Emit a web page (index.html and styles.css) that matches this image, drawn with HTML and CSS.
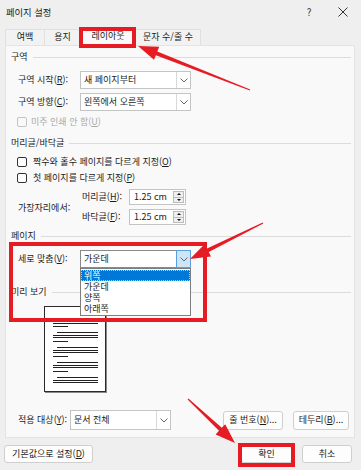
FILE: index.html
```html
<!DOCTYPE html>
<html lang="ko">
<head>
<meta charset="utf-8">
<title>페이지 설정</title>
<link rel="stylesheet" href="styles.css">
</head>
<body>
<div class="titlebar">
  <span class="title">페이지 설정</span>
  <span class="help">?</span>
  <svg class="close" width="10" height="10" viewBox="0 0 10 10"><path d="M0.5 0.5L9.5 9.5M9.5 0.5L0.5 9.5" stroke="#333" stroke-width="1" fill="none"/></svg>
</div>
<div class="tabs">
  <div class="tab t1">여백</div>
  <div class="tab t2">용지</div>
  <div class="tab t3 active">레이아웃</div>
  <div class="tab t4">문자 수/줄 수</div>
</div>
<div class="panel">
  <div class="glabel g-first"><span>구역</span><i></i></div>
  <div class="row sel-row r1">
    <span class="lbl">구역 시작(<u>R</u>):</span>
    <div class="select"><span class="val">새 페이지부터</span><span class="chev"><svg width="8" height="5" viewBox="0 0 8 5"><path d="M0.5 0.5L4 4L7.5 0.5" stroke="#666" fill="none"/></svg></span></div>
  </div>
  <div class="row sel-row r2">
    <span class="lbl">구역 방향(<u>C</u>):</span>
    <div class="select"><span class="val">왼쪽에서 오른쪽</span><span class="chev"><svg width="8" height="5" viewBox="0 0 8 5"><path d="M0.5 0.5L4 4L7.5 0.5" stroke="#666" fill="none"/></svg></span></div>
  </div>
  <div class="cb-row disabled r3"><span class="box"></span><span>미주 인쇄 안 함(<u>U</u>)</span></div>

  <div class="glabel g2"><span>머리글/바닥글</span><i></i></div>
  <div class="cb-row r4"><span class="box"></span><span>짝수와 홀수 페이지를 다르게 지정(<u>O</u>)</span></div>
  <div class="cb-row r5"><span class="box"></span><span>첫 페이지를 다르게 지정(<u>P</u>)</span></div>
  <div class="edge">
    <span class="edge-lbl">가장자리에서:</span>
    <div class="edge-col">
      <div class="spin-row"><span class="slbl">머리글(<u>H</u>):</span><div class="spin"><span class="sval">1.25 cm</span><span class="sbtns"><span class="sb up"></span><span class="sb down"></span></span></div></div>
      <div class="spin-row"><span class="slbl">바닥글(<u>F</u>):</span><div class="spin"><span class="sval">1.25 cm</span><span class="sbtns"><span class="sb up"></span><span class="sb down"></span></span></div></div>
    </div>
  </div>

  <div class="glabel g3"><span>페이지</span><i></i></div>
  <div class="row sel-row r6">
    <span class="lbl">세로 맞춤(<u>V</u>):</span>
    <div class="select open"><span class="val">가운데</span><span class="chev"><svg width="8" height="5" viewBox="0 0 8 5"><path d="M0.5 0.5L4 4L7.5 0.5" stroke="#666" fill="none"/></svg></span>
      <ul class="dropdown">
        <li class="hl">위쪽</li>
        <li>가운데</li>
        <li>양쪽</li>
        <li>아래쪽</li>
      </ul>
    </div>
  </div>

  <div class="glabel g4"><span>미리 보기</span><i></i></div>
  <div class="preview">
    <svg width="64" height="88" viewBox="0 0 64 88">
      <rect x="1" y="1" width="62" height="86" fill="#8a8a8a"/>
      <rect x="0.5" y="0.5" width="61" height="85" fill="#fff" stroke="#2a2a2a"/>
      <g fill="#222">
        <rect x="13" y="12" width="41" height="1"/>
        <rect x="9" y="17" width="45" height="1"/>
        <rect x="9" y="20" width="15" height="1"/>
        <rect x="13" y="26" width="41" height="1"/>
        <rect x="9" y="29" width="45" height="1"/>
        <rect x="9" y="31" width="45" height="1"/>
        <rect x="9" y="35" width="15" height="1"/>
        <rect x="13" y="41" width="41" height="1"/>
        <rect x="9" y="44" width="45" height="1"/>
        <rect x="9" y="46" width="45" height="1"/>
        <rect x="9" y="50" width="15" height="1"/>
        <rect x="13" y="56" width="41" height="1"/>
        <rect x="9" y="59" width="45" height="1"/>
        <rect x="9" y="61" width="45" height="1"/>
        <rect x="9" y="65" width="15" height="1"/>
        <rect x="13" y="71" width="41" height="1"/>
        <rect x="9" y="74" width="45" height="1"/>
        <rect x="9" y="76" width="45" height="1"/>
      </g>
    </svg>
  </div>

  <div class="apply">
    <span class="alb">적용 대상(<u>Y</u>):</span>
    <div class="select wide"><span class="val">문서 전체</span><span class="chev"><svg width="8" height="5" viewBox="0 0 8 5"><path d="M0.5 0.5L4 4L7.5 0.5" stroke="#666" fill="none"/></svg></span></div>
    <button class="btn b-line">줄 번호(<u>N</u>)...</button>
    <button class="btn b-border">테두리(<u>B</u>)...</button>
  </div>
</div>
<div class="footer">
  <button class="btn b-default">기본값으로 설정(<u>D</u>)</button>
  <button class="btn b-ok">확인</button>
  <button class="btn b-cancel">취소</button>
</div>

<div class="mark m-tab"></div>
<div class="mark m-page"></div>
<div class="mark m-ok"></div>
<svg class="arrows" width="361" height="470" viewBox="0 0 361 470">
  <g fill="#e51c23">
    <polygon points="138,46 159.2,46.8 157.3,51.4 250.2,89.4 249.8,90.6 155.9,55.2 154.0,59.8"/>
    <polygon points="190,259 211.0,256.5 208.8,252.0 263.3,223.5 262.7,222.5 207.0,248.4 204.8,243.9"/>
    <polygon points="235,443 225.2,424.2 221.8,427.8 188.4,398.6 187.6,399.4 219.0,430.8 215.6,434.4"/>
  </g>
</svg>
</body>
</html>
```
FILE: styles.css
```css
* { box-sizing: border-box; margin: 0; padding: 0; }
html, body { width: 361px; height: 470px; overflow: hidden; }
body {
  position: relative;
  background: #efefef;
  font-family: "Noto Sans CJK KR", "Noto Sans", sans-serif;
  font-size: 9px;
  line-height: 12px;
  color: #1b1b1b;
}
u { text-decoration: underline; text-underline-offset: 1px; }

.titlebar {
  height: 28px;
  display: flex;
  align-items: flex-start;
  padding: 6px 0 0 6px;
}
.title { font-size: 9.3px; }
.help { margin-left: auto; width: 8px; text-align: center; font-size: 10px; margin-right: 25px; color: #333; }
.close { margin-top: 1px; margin-right: 13px; }

.tabs {
  display: flex;
  align-items: flex-end;
  height: 17px;
  margin-left: 5px;
}
.tab {
  height: 16px;
  line-height: 14px;
  text-align: center;
  background: #f2f2f2;
  border: 1px solid #e0e0e0;
  border-bottom: none;
  margin-right: -1px;
}
.t1 { width: 40px; }
.t2 { width: 37px; }
.t3 { width: 56px; }
.t4 { width: 66px; }
.tab.active { height: 18px; background: #f9f9f9; line-height: 16px; position: relative; z-index: 1; }

.panel {
  margin-left: 5px;
  width: 350px;
  height: 393px;
  background: #f9f9f9;
  border: 1px solid #e3e3e3;
  display: flex;
  flex-direction: column;
}

.glabel {
  display: flex;
  align-items: center;
  height: 12px;
  padding-left: 5px;
  padding-right: 3px;
}
.glabel i { flex: 1; height: 1px; background: #dcdcdc; margin-left: 5px; }
.g-first { margin-top: 5px; }
.g2 { margin-top: 9px; }
.g3 { margin-top: 5px; }
.g4 { margin-top: 18px; }

.row { display: flex; align-items: center; padding-left: 12px; }
.sel-row { height: 18px; }
.r1 { margin-top: 8px; }
.r2 { margin-top: 4px; }
.r6 { margin-top: 8px; }
.lbl { width: 62px; }

.select {
  position: relative;
  width: 111px;
  height: 18px;
  background: #fff;
  border: 1px solid #c4c4c4;
  display: flex;
  align-items: center;
}
.select .val { flex: 1; padding-left: 3px; }
.chev {
  width: 14px;
  height: 100%;
  border-left: 1px solid #d8d8d8;
  display: flex;
  align-items: center;
  justify-content: center;
}
.select.open { border-color: #8a8a8a; }
.select.open .chev { background: #cde5f8; border: 1px solid #5b9fdc; margin: -1px -1px -1px 0; height: 18px; width: 15px; }

.dropdown {
  list-style: none;
  position: absolute;
  left: -1px;
  top: 17px;
  width: 111px;
  background: #fff;
  border: 1px solid #7e7e7e;
  padding: 1px 0 1px 0;
  z-index: 3;
}
.dropdown li { height: 11px; line-height: 11px; padding-left: 3px; }
.dropdown li.hl { background: #0078d7; color: #fff; outline: 1px dotted #9fd0ff; outline-offset: -1px; }

.cb-row { display: flex; align-items: center; height: 12px; padding-left: 11px; }
.cb-row .box {
  width: 10px; height: 10px;
  border: 1px solid #333;
  border-radius: 2px;
  background: #fff;
  margin-right: 6px;
}
.cb-row.disabled { color: #a9a9a9; }
.cb-row.disabled .box { border-color: #c4c4c4; background: #f9f9f9; margin-right: 4px; }
.r3 { margin-top: 5px; }
.r4 { margin-top: 7px; }
.r5 { margin-top: 4px; }

.edge { display: flex; align-items: center; padding-left: 12px; margin-top: 5px; height: 36px; }
.edge-lbl { width: 64px; margin-top: 2px; }
.edge-col { display: flex; flex-direction: column; gap: 4px; }
.spin-row { display: flex; align-items: center; height: 16px; }
.slbl { width: 47px; }
.spin {
  width: 57px; height: 16px;
  background: #fff;
  border: 1px solid #c4c4c4;
  display: flex;
  align-items: center;
  padding: 1px;
}
.sval { flex: 1; padding-left: 3px; font-size: 9px; }
.sbtns { width: 11px; height: 100%; display: flex; flex-direction: column; }
.sb {
  flex: 1;
  background: #efefef;
  border: 1px solid #bcbcbc;
  display: flex; align-items: center; justify-content: center;
}
.sb.down { border-top: none; }
.sb::after { content: ""; border-left: 2px solid transparent; border-right: 2px solid transparent; }
.sb.up::after { border-bottom: 2px solid #111; }
.sb.down::after { border-top: 2px solid #111; }

.preview { margin-top: 8px; padding-left: 38px; height: 86px; }
.preview svg { display: block; }

.apply { display: flex; align-items: center; height: 20px; margin-top: 18px; padding-left: 12px; padding-right: 5px; }
.alb { width: 52px; }
.select.wide { width: 101px; height: 20px; }

.btn {
  font: inherit;
  color: #1b1b1b;
  background: #fdfdfd;
  border: 1px solid #cfcfcf;
  border-radius: 3px;
  height: 19px;
  display: flex; align-items: center; justify-content: center;
}
.b-line { margin-left: auto; width: 60px; }
.b-border { margin-left: 10px; width: 56px; }

.footer { display: flex; margin-top: 7px; padding-left: 4px; }
.b-default { width: 89px; height: 18px; }
.b-ok { margin-left: auto; width: 51px; height: 18px; }
.b-cancel { margin-left: 10px; margin-right: 9px; width: 50px; height: 18px; }

.mark { position: absolute; border: 4px solid #e51c23; z-index: 5; }
.m-tab { left: 79px; top: 27px; width: 57px; height: 21px; }
.m-page { left: 9px; top: 242px; width: 198px; height: 80px; }
.m-ok { left: 238px; top: 443px; width: 57px; height: 24px; }
.arrows { position: absolute; left: 0; top: 0; z-index: 6; }
```
